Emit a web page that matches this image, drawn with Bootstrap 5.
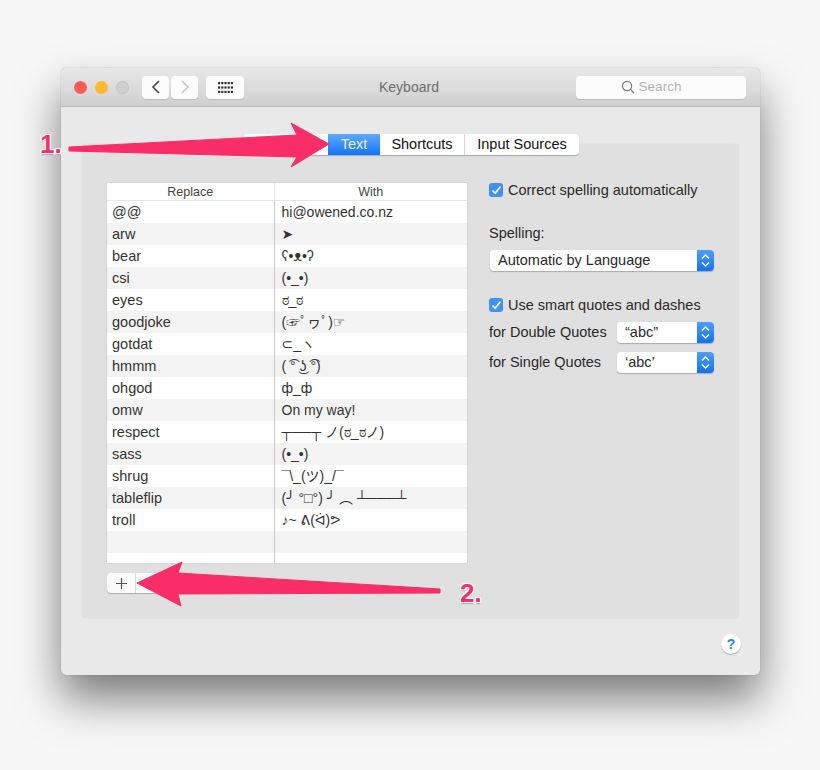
<!DOCTYPE html>
<html lang="en">
<head>
  <meta charset="UTF-8">
  <meta name="viewport" content="width=device-width, initial-scale=1.0">
  <title>Keyboard</title>
  <link href="https://cdn.jsdelivr.net/npm/bootstrap@5.3.1/dist/css/bootstrap.min.css" rel="stylesheet">
  <style>
    html, body { height: 100%; overflow: hidden; }
    body {
      background-color: #f7f7f7;
      font-family: "Liberation Sans", "DejaVu Sans", "Noto Sans CJK JP", sans-serif;
      font-size: 14.5px;
      color: #2a2a2a;
      position: relative;
    }
    .mac-window {
      width: 699px;
      height: 607px;
      margin: 68px 0 0 61px;
      background: #e9e9e9;
      border-radius: 5px;
      box-shadow: 0 0 1px rgba(0,0,0,.45), 0 24px 44px rgba(0,0,0,.5);
    }
    .mac-titlebar {
      height: 39px;
      padding: 0 14px 0 13px;
      background: linear-gradient(#e9e8e9, #d0cfd0);
      border-bottom: 1px solid #bcbcbc;
      border-radius: 5px 5px 0 0;
    }
    .light { width: 13px; height: 13px; border-radius: 50%; }
    .tool-btn {
      height: 23px;
      background: #fcfcfc;
      border-radius: 4px;
      box-shadow: 0 1px 0 #b9b9b9;
    }
    .back-btn { width: 27px; margin-left: 13px; }
    .fwd-btn { width: 27px; margin-left: 2px; }
    .grid-btn { width: 38px; margin-left: 8px; }
    .title-text { color: #6f6d6f; font-size: 14px; left: 318px; }
    .search-box { width: 170px; height: 23px; padding-right: 20px; color: #b2b2b2; font-size: 13.5px; }
    .tab-strip {
      width: 336px;
      height: 21px;
      margin: 27px 0 -11px 182px;
      background: #fff;
      border-radius: 4px;
      box-shadow: 0 1px 1px #aaa;
      position: relative;
      font-size: 14.5px;
    }
    .tab-item { padding-top: 1px; line-height: 19px; color: #111; text-align: center; }
    .tab-gap { width: 85px; }
    .tab-active { width: 52px; background: linear-gradient(#5fa9fb, #1574f5); color: #e9f2ff; }
    .tab-short { width: 85px; border-right: 1px solid #d4d4d4; }
    .tab-input { width: 114px; }
    .mac-panel {
      height: 474px;
      margin: 0 21px;
      padding: 39px 25px 0;
      background: #e0e0e0;
      border-radius: 4px;
      box-shadow: 0 0 1px #c4c4c4;
    }
    .subs-wrap {
      width: 360px;
      height: 380px;
      background: #fff;
      overflow: hidden;
      box-shadow: 0 0 1px #999;
    }
    .subs-table { table-layout: fixed; margin: 0; width: 360px; }
    .subs-table > * > tr > * {
      height: 22px;
      padding: 0 0 0 5px;
      font-size: 14.5px;
      line-height: 22px;
      color: #333;
      background: transparent;
      border: 0;
      white-space: nowrap;
      overflow: hidden;
    }
    .subs-table > thead > tr > th {
      height: 17px;
      padding: 0;
      line-height: 16px;
      font-size: 12.5px;
      font-weight: 400;
      text-align: center;
      color: #444;
      border-bottom: 1px solid #e4e4e4;
    }
    .subs-table > tbody > tr:nth-child(even) > td { background: #f3f3f3; }
    .subs-table tr > *:first-child { width: 167px; border-right: 1px solid #c9c9c9; }
    .subs-table > thead > tr > th:first-child { border-right-color: #e9e9e9; }
    .subs-table tr > td:last-child { font-size: 14px; padding-left: 7px; }
    .add-remove {
      width: 60px;
      height: 20px;
      margin-top: 10px;
      background: #fafafa;
      border-radius: 4px;
      box-shadow: 0 1px 1px #aaa;
    }
    .add-btn { width: 29px; border-right: 1px solid #d9d9d9; }
    .opts-col { width: 226px; margin-left: 22px; }
    .opt-line { height: 14px; line-height: 14px; }
    .tick-box {
      width: 14px;
      height: 14px;
      background: #3f92f4;
      border-radius: 3px;
      flex: none;
    }
    .mac-select {
      height: 21px;
      line-height: 21px;
      background: #fff;
      border-radius: 4px;
      box-shadow: 0 1px 1px #aaa;
      overflow: hidden;
    }
    .select-label { padding-left: 8px; }
    .select-step {
      width: 17px;
      background: linear-gradient(#4f9ffa, #1271ee);
      flex: none;
    }
    .quote-select { width: 97px; }
    .help-btn {
      width: 20px;
      height: 20px;
      margin: 16px 19px 0 auto;
      background: #fff;
      border-radius: 50%;
      box-shadow: 0 1px 1px #aaa;
      color: #2f80e7;
      font-weight: 700;
      font-size: 14px;
      line-height: 20px;
      text-align: center;
    }
    .arrow-layer { position: absolute; left: 0; top: 0; pointer-events: none; }
    .step-num {
      position: absolute;
      font-size: 26px;
      font-weight: 700;
      line-height: 26px;
      color: #f92d68;
      text-shadow: -1px -1px 0 #fff, 1px -1px 0 #fff, -1px 1px 0 #fff, 1px 1px 0 #fff, 0 2px 1px #aaa;
    }
    .step-one { left: 40px; top: 131px; }
    .step-two { left: 460px; top: 580px; }
  </style>
</head>
<body>
  <div class="mac-window">
    <div class="mac-titlebar d-flex align-items-center position-relative">
      <span class="light me-2" style="background:#fc5b57"></span>
      <span class="light me-2" style="background:#fdb92f"></span>
      <span class="light" style="background:#cfcfcf;box-shadow:inset 0 0 0 1px #c2c2c2"></span>
      <div class="tool-btn back-btn d-flex align-items-center justify-content-center">
        <svg width="10" height="14" viewBox="0 0 10 14"><path d="M8 1 2 7l6 6" fill="none" stroke="#444" stroke-width="1.6"/></svg>
      </div>
      <div class="tool-btn fwd-btn d-flex align-items-center justify-content-center">
        <svg width="10" height="14" viewBox="0 0 10 14"><path d="M2 1l6 6-6 6" fill="none" stroke="#c4c4c4" stroke-width="1.6"/></svg>
      </div>
      <div class="tool-btn grid-btn d-flex align-items-center justify-content-center">
        <svg width="15" height="11" viewBox="0 0 15 11" fill="#333">
          <rect x="0" y="0" width="2.2" height="2.2"/><rect x="3.2" y="0" width="2.2" height="2.2"/><rect x="6.4" y="0" width="2.2" height="2.2"/><rect x="9.6" y="0" width="2.2" height="2.2"/><rect x="12.8" y="0" width="2.2" height="2.2"/>
          <rect x="0" y="4.4" width="2.2" height="2.2"/><rect x="3.2" y="4.4" width="2.2" height="2.2"/><rect x="6.4" y="4.4" width="2.2" height="2.2"/><rect x="9.6" y="4.4" width="2.2" height="2.2"/><rect x="12.8" y="4.4" width="2.2" height="2.2"/>
          <rect x="0" y="8.8" width="2.2" height="2.2"/><rect x="3.2" y="8.8" width="2.2" height="2.2"/><rect x="6.4" y="8.8" width="2.2" height="2.2"/><rect x="9.6" y="8.8" width="2.2" height="2.2"/><rect x="12.8" y="8.8" width="2.2" height="2.2"/>
        </svg>
      </div>
      <span class="title-text position-absolute">Keyboard</span>
      <div class="tool-btn search-box d-flex align-items-center justify-content-center gap-1 ms-auto">
        <svg width="14" height="14" viewBox="0 0 14 14"><circle cx="6" cy="6" r="4.6" fill="none" stroke="#777" stroke-width="1.2"/><path d="M9.4 9.4 13 13" stroke="#777" stroke-width="1.3"/></svg>
        <span>Search</span>
      </div>
    </div>

    <div class="tab-strip d-flex">
      <div class="tab-gap"></div>
      <div class="tab-item tab-active">Text</div>
      <div class="tab-item tab-short">Shortcuts</div>
      <div class="tab-item tab-input">Input Sources</div>
    </div>

    <div class="mac-panel d-flex">
      <div>
        <div class="subs-wrap">
          <table class="table subs-table">
            <thead>
              <tr><th>Replace</th><th>With</th></tr>
            </thead>
            <tbody>
              <tr><td>@@</td><td>hi@owened.co.nz</td></tr>
              <tr><td>arw</td><td>➤</td></tr>
              <tr><td>bear</td><td>ʕ•ᴥ•ʔ</td></tr>
              <tr><td>csi</td><td>(•_•)</td></tr>
              <tr><td>eyes</td><td>ಠ_ಠ</td></tr>
              <tr><td>goodjoke</td><td>(☞ﾟヮﾟ)☞</td></tr>
              <tr><td>gotdat</td><td>⊂_ヽ</td></tr>
              <tr><td>hmmm</td><td>( ͡° ͜ʖ ͡°)</td></tr>
              <tr><td>ohgod</td><td>ф_ф</td></tr>
              <tr><td>omw</td><td>On my way!</td></tr>
              <tr><td>respect</td><td>┬──┬ ノ(ಠ_ಠノ)</td></tr>
              <tr><td>sass</td><td>(•_•)</td></tr>
              <tr><td>shrug</td><td>¯\_(ツ)_/¯</td></tr>
              <tr><td>tableflip</td><td>(╯ °□°) ╯ ︵ ┴───┴</td></tr>
              <tr><td>troll</td><td>♪~ ᕕ(ᐛ)ᕗ</td></tr>
              <tr><td>&nbsp;</td><td>&nbsp;</td></tr>
              <tr><td>&nbsp;</td><td>&nbsp;</td></tr>
            </tbody>
          </table>
        </div>
        <div class="add-remove d-flex">
          <div class="add-btn d-flex align-items-center justify-content-center">
            <svg width="13" height="13" viewBox="0 0 13 13"><path d="M6.5 1v11M1 6.5h11" stroke="#555" stroke-width="1.2"/></svg>
          </div>
        </div>
      </div>

      <div class="opts-col">
        <div class="d-flex align-items-center opt-line" style="margin-bottom:29px;gap:5px">
          <span class="tick-box d-flex align-items-center justify-content-center">
            <svg width="11" height="10" viewBox="0 0 11 10"><path d="M1.5 5.5 4.2 8.3 9.5 1.5" fill="none" stroke="#fff" stroke-width="1.7"/></svg>
          </span>
          <span>Correct spelling automatically</span>
        </div>
        <div style="margin-bottom:9px;line-height:16px;margin-top:-1px">Spelling:</div>
        <div class="mac-select d-flex justify-content-between" style="margin-left:1px;margin-bottom:27px">
          <span class="select-label">Automatic by Language</span>
          <span class="select-step d-flex align-items-center justify-content-center">
            <svg width="9" height="15" viewBox="0 0 9 15"><path d="M1 5.5 4.5 2 8 5.5M1 9.5 4.5 13 8 9.5" fill="none" stroke="#fff" stroke-width="1.4"/></svg>
          </span>
        </div>
        <div class="d-flex align-items-center opt-line" style="margin-bottom:10px;gap:5px">
          <span class="tick-box d-flex align-items-center justify-content-center">
            <svg width="11" height="10" viewBox="0 0 11 10"><path d="M1.5 5.5 4.2 8.3 9.5 1.5" fill="none" stroke="#fff" stroke-width="1.7"/></svg>
          </span>
          <span>Use smart quotes and dashes</span>
        </div>
        <div class="d-flex justify-content-between align-items-center" style="margin-bottom:8px">
          <span>for Double Quotes</span>
          <div class="mac-select quote-select d-flex justify-content-between">
            <span class="select-label">“abc”</span>
            <span class="select-step d-flex align-items-center justify-content-center">
              <svg width="9" height="15" viewBox="0 0 9 15"><path d="M1 5.5 4.5 2 8 5.5M1 9.5 4.5 13 8 9.5" fill="none" stroke="#fff" stroke-width="1.4"/></svg>
            </span>
          </div>
        </div>
        <div class="d-flex justify-content-between align-items-center">
          <span>for Single Quotes</span>
          <div class="mac-select quote-select d-flex justify-content-between">
            <span class="select-label">‘abc’</span>
            <span class="select-step d-flex align-items-center justify-content-center">
              <svg width="9" height="15" viewBox="0 0 9 15"><path d="M1 5.5 4.5 2 8 5.5M1 9.5 4.5 13 8 9.5" fill="none" stroke="#fff" stroke-width="1.4"/></svg>
            </span>
          </div>
        </div>
      </div>
    </div>

    <div class="help-btn">?</div>
  </div>

  <svg class="arrow-layer" width="820" height="770" viewBox="0 0 820 770">
    <path d="M69 147 297 135 291 123 329 144 291 167 297 157 69 151Z" fill="#f92d68" stroke="#f92d68" stroke-width="1" stroke-linejoin="round"/>
    <path d="M440 589 178 573 182 562 137 583 181 606 178 594 440 593Z" fill="#f92d68" stroke="#f92d68" stroke-width="1" stroke-linejoin="round"/>
  </svg>
  <span class="step-num step-one">1.</span>
  <span class="step-num step-two">2.</span>

  <script src="https://cdn.jsdelivr.net/npm/bootstrap@5.3.1/dist/js/bootstrap.bundle.min.js"></script>
</body>
</html>
